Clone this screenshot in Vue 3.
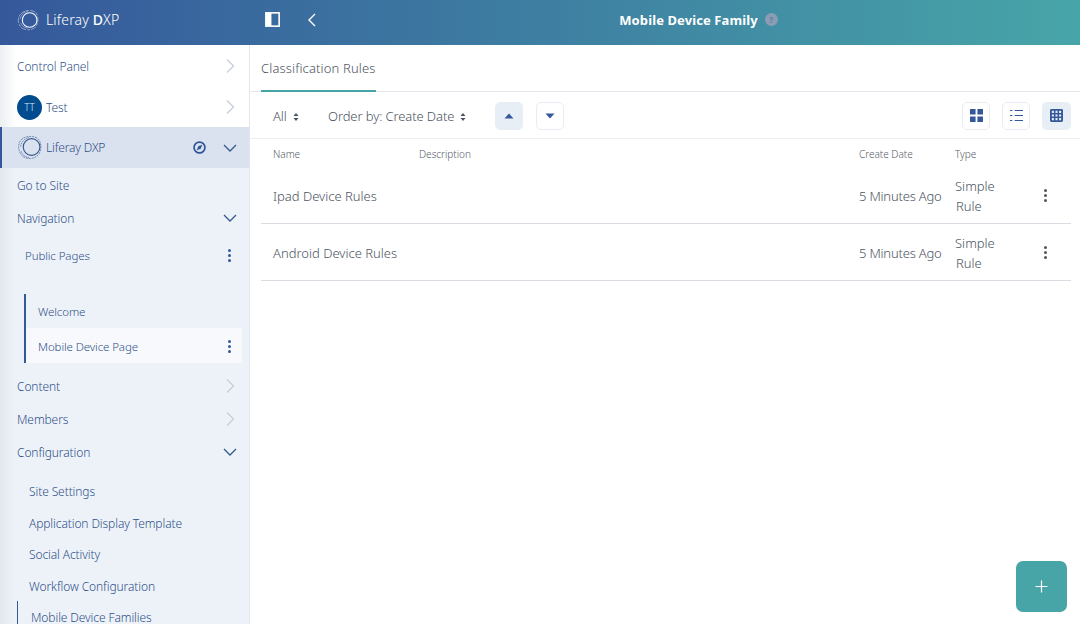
<template>
  <div class="app">
    <header class="topbar">
      <div class="brand">
        <svg class="logo" viewBox="0 0 24 24" fill="none" stroke="#fff">
          <path d="M4 5.500C8 .8 16 .5 20 3.500c3.500 3 4 11.500.5 16-3.500 3.800-11 4.300-15.500 1C.8 17 0 10 4 5.500z" stroke-width="0.6" stroke-dasharray="6 1 3 1.500" opacity="0.8" />
          <path d="M3.500 11C4 6.500 7.500 3 12 2.800M4 15c1 3.500 4 5.500 7.500 5.800" stroke-width="0.6" opacity="0.7" />
          <circle cx="13.800" cy="12" r="8" stroke-width="1.100" />
        </svg>
        <span>Liferay <b>D</b>XP</span>
      </div>
      <div class="top-actions">
        <svg class="panel-icon" viewBox="0 0 16 16">
          <path fill="#fff" d="M1 1h14v14H1z" />
          <path fill="#3b6a9c" d="M7 2.500h6.500v11H7z" />
        </svg>
        <svg class="back-icon" viewBox="0 0 10 16" fill="none" stroke="#fff" stroke-width="1.400">
          <path d="M8 2 2 8l6 6" />
        </svg>
      </div>
      <div class="title">
        <span>Mobile Device Family</span>
        <i class="help">?</i>
      </div>
    </header>

    <div class="body">
      <aside class="sidebar">
        <div class="side-white">
          <div class="row row-panel">
            <span>Control Panel</span>
            <svg class="chev-r" viewBox="0 0 10 16"><path d="M2 1.500 8.500 8 2 14.500" /></svg>
          </div>
          <div class="row row-test">
            <span class="avatar">TT</span>
            <span>Test</span>
            <svg class="chev-r" viewBox="0 0 10 16"><path d="M2 1.500 8.500 8 2 14.500" /></svg>
          </div>
        </div>
        <div class="site-row">
          <svg class="site-logo" viewBox="0 0 24 24" fill="none" stroke="#35578f">
            <path d="M4 4.500C8 .5 17 .3 20.500 4c3.500 4 3.300 11.500-.5 15.500-3.500 3.700-11 4.300-15 .5C1 16 .3 8.500 4 4.500z" stroke-width="0.6" stroke-dasharray="2 .8" />
            <path d="M3.500 11C4 6.500 7.500 3 12 2.500M4 15.500c1 3.500 4 5.800 7.500 6" stroke-width="0.6" stroke-dasharray="1.500 .7" />
            <circle cx="14" cy="11.500" r="8" stroke-width="1.100" />
          </svg>
          <span class="site-name">Liferay DXP</span>
          <svg class="compass" viewBox="0 0 16 16">
            <circle cx="8" cy="8" r="5.800" fill="none" stroke="#2f5597" stroke-width="1.800" />
            <path fill="#2f5597" d="M11 5 9.300 9.300 5 11l1.700-4.300z" />
          </svg>
          <svg class="chev-d" viewBox="0 0 16 10"><path d="M2 2 8 8l6-6" /></svg>
        </div>

        <div class="row"><span>Go to Site</span></div>
        <div class="row">
          <span>Navigation</span>
          <svg class="chev-d" viewBox="0 0 16 10"><path d="M2 2 8 8l6-6" /></svg>
        </div>
        <div class="row public-row">
          <span>Public Pages</span>
          <span class="kebab"><i></i><i></i><i></i></span>
        </div>
        <div class="page-tree">
          <div class="page">Welcome</div>
          <div class="page page-active">
            <span>Mobile Device Page</span>
            <span class="kebab"><i></i><i></i><i></i></span>
          </div>
        </div>
        <div class="row">
          <span>Content</span>
          <svg class="chev-r" viewBox="0 0 10 16"><path d="M2 1.500 8.500 8 2 14.500" /></svg>
        </div>
        <div class="row">
          <span>Members</span>
          <svg class="chev-r" viewBox="0 0 10 16"><path d="M2 1.500 8.500 8 2 14.500" /></svg>
        </div>
        <div class="row">
          <span>Configuration</span>
          <svg class="chev-d" viewBox="0 0 16 10"><path d="M2 2 8 8l6-6" /></svg>
        </div>
        <div class="config-list">
          <div v-for="item in configItems" :key="item" class="config-item">{{ item }}</div>
          <div class="config-item config-active">Mobile Device Families</div>
        </div>
      </aside>

      <main class="main">
        <nav class="tabs">
          <span class="tab">Classification Rules</span>
        </nav>
        <div class="toolbar">
          <span class="filter filter-all">All <svg class="updown" viewBox="0 0 6 10"><path d="M3 1 5.500 4h-5zM3 9 .5 6h5z" /></svg></span>
          <span class="filter filter-order">Order by: Create Date <svg class="updown" viewBox="0 0 6 10"><path d="M3 1 5.500 4h-5zM3 9 .5 6h5z" /></svg></span>
          <button class="tbtn tbtn-on"><svg viewBox="0 0 10 6"><path d="M5 .5 9.500 5.500h-9z" /></svg></button>
          <button class="tbtn sort-down"><svg viewBox="0 0 10 6"><path d="M5 5.500.5 .5h9z" /></svg></button>
          <div class="views">
            <button class="tbtn view">
              <svg viewBox="0 0 14 14"><path d="M0 0h6v6H0zM8 0h6v6H8zM0 8h6v6H0zM8 8h6v6H8z" /></svg>
            </button>
            <button class="tbtn view">
              <svg viewBox="0 0 14 14"><path d="M0 1h2.500v1.200H0zM5 1h9v1.200H5zM0 6.400h2.500v1.200H0zM5 6.400h9v1.200H5zM0 11.800h2.500V13H0zM5 11.800h9V13H5z" /></svg>
            </button>
            <button class="tbtn tbtn-on view view-last">
              <svg viewBox="0 0 14 14"><path fill-rule="evenodd" d="M1.500 0h11A1.500 1.500 0 0 1 14 1.500v11a1.500 1.500 0 0 1-1.500 1.500h-11A1.500 1.500 0 0 1 0 12.500v-11A1.500 1.500 0 0 1 1.500 0zM2 2v2.200h2.200V2zm3.900 0v2.200h2.200V2zm3.900 0v2.200H12V2zM2 5.900v2.200h2.200V5.900zm3.900 0v2.200h2.200V5.900zm3.900 0v2.200H12V5.900zM2 9.800V12h2.200V9.800zm3.900 0V12h2.200V9.800zm3.900 0V12H12V9.800z" /></svg>
            </button>
          </div>
        </div>

        <div class="table">
          <div class="thead">
            <span class="c-name">Name</span>
            <span class="c-desc">Description</span>
            <span class="c-date">Create Date</span>
            <span class="c-type">Type</span>
          </div>
          <div v-for="rule in rules" :key="rule" class="trow">
            <span class="c-name c-wide">{{ rule }}</span>
            <span class="c-date">5 Minutes Ago</span>
            <span class="c-type">Simple Rule</span>
            <span class="kebab kebab-gray"><i></i><i></i><i></i></span>
          </div>
        </div>

        <button class="fab">
          <svg viewBox="0 0 14 14" fill="none" stroke="#fff" stroke-width="1.300"><path d="M7 .5v13M.5 7h13" /></svg>
        </button>
      </main>
    </div>
  </div>
</template>

<script setup>
const configItems = [
  'Site Settings',
  'Application Display Template',
  'Social Activity',
  'Workflow Configuration'
]

const rules = ['Ipad Device Rules', 'Android Device Rules']
</script>

<style>
html, body {
  margin: 0;
  background: #fff;
}
</style>

<style scoped>
.app {
  width: 1080px;
  height: 624px;
  overflow: hidden;
  display: flex;
  flex-direction: column;
  font-family: "Noto Sans", "Open Sans", sans-serif;
  font-size: 13px;
  font-weight: 300;
  color: #3a5a8f;
}

.topbar {
  flex: 0 0 45px;
  box-sizing: border-box;
  padding-bottom: 6px;
  display: flex;
  align-items: center;
  background: linear-gradient(90deg, #35589b 0%, #47a5a8 100%);
  color: #fff;
}

.brand {
  width: 250px;
  padding-left: 17px;
  box-sizing: border-box;
  display: flex;
  align-items: center;
  gap: 7px;
  font-size: 14px;
  letter-spacing: 0.15px;
}

.brand b {
  font-weight: 500;
}

.logo {
  width: 22px;
  height: 22px;
}

.top-actions {
  display: flex;
  align-items: center;
  padding-left: 14px;
  gap: 26px;
}

.panel-icon {
  width: 17px;
  height: 17px;
}

.back-icon {
  width: 10px;
  height: 16px;
}

.title {
  flex: 1;
  display: flex;
  align-items: center;
  justify-content: center;
  gap: 7px;
  font-size: 13px;
  font-weight: 700;
  letter-spacing: 0.1px;
}

.help {
  width: 13px;
  height: 13px;
  border-radius: 50%;
  background: #8a9db4;
  color: #5f7d9d;
  font-size: 8px;
  font-style: normal;
  line-height: 13px;
  text-align: center;
}

.body {
  flex: 1;
  display: flex;
  min-height: 0;
}

.sidebar {
  width: 250px;
  box-sizing: border-box;
  border-right: 1px solid #e3e6ec;
  background: linear-gradient(90deg, #e3e8f0 0, #edf2f9 14px);
  font-size: 12px;
  letter-spacing: -0.1px;
}

.side-white {
  background: linear-gradient(90deg, #eceef2 0, #fff 16px);
  padding-top: 3px;
}

.row {
  height: 33px;
  box-sizing: border-box;
  display: flex;
  align-items: center;
  padding: 1px 11px 0 17px;
  color: #2f5088;
}

.row > .chev-r,
.row > .chev-d,
.row > .kebab {
  margin-left: auto;
}

.row-panel {
  height: 35px;
}

.row-test {
  height: 44px;
  padding-top: 4px;
  gap: 4px;
}

.avatar {
  width: 25px;
  height: 25px;
  border-radius: 50%;
  background: #004c8f;
  color: #dde6f2;
  font-size: 10px;
  line-height: 25px;
  text-align: center;
}

.chev-r {
  width: 10px;
  height: 16px;
  margin-right: 3px;
  fill: none;
  stroke: #c5ccd8;
  stroke-width: 1.200;
}

.chev-d {
  width: 16px;
  height: 10px;
  fill: none;
  stroke: #34598f;
  stroke-width: 1.300;
}

.site-row {
  height: 41px;
  display: flex;
  align-items: center;
  padding: 0 11px 0 15px;
  background: #dbe2ef;
  border-left: 2px solid #35589b;
  box-sizing: border-box;
}

.site-logo {
  width: 25px;
  height: 25px;
  flex: none;
}

.site-name {
  margin-left: 4px;
  color: #2f5088;
  letter-spacing: -0.15px;
}

.compass {
  width: 15px;
  height: 15px;
  margin-left: auto;
  margin-right: 15px;
}

.public-row {
  height: 41px;
  padding-left: 25px;
  padding-right: 18px;
  font-size: 11.500px;
}

.kebab {
  display: flex;
  flex-direction: column;
  gap: 2px;
  width: 3px;
}

.kebab i {
  width: 3px;
  height: 3px;
  border-radius: 50%;
  background: #35589b;
}

.page-tree {
  margin: 19px 7px 6px 24px;
  border-left: 2px solid #35589b;
  font-size: 11.500px;
}

.page {
  height: 34px;
  box-sizing: border-box;
  display: flex;
  align-items: center;
  padding: 1px 11px 0 12px;
  color: #2f5088;
}

.page-active {
  height: 35px;
  background: #f7f9fd;
}

.page-active .kebab {
  margin-left: auto;
}

.config-list {
  padding-top: 7px;
}

.config-item {
  height: 31.500px;
  line-height: 33.500px;
  padding-left: 29px;
  color: #2f5088;
}

.config-active {
  margin-left: 17px;
  padding-left: 13px;
  border-left: 1px solid #35589b;
}

.main {
  flex: 1;
  position: relative;
  padding: 0 9px 0 11px;
  min-width: 0;
}

.tabs {
  height: 47px;
  margin: 0 -9px 0 -11px;
  padding-left: 11px;
  border-bottom: 1px solid #e3e6ec;
  display: flex;
  box-sizing: border-box;
}

.tab {
  height: 47px;
  line-height: 47px;
  border-bottom: 2px solid #47a5a8;
  box-sizing: border-box;
  font-size: 13px;
  letter-spacing: 0.15px;
  color: #4c5462;
}

.toolbar {
  height: 47px;
  margin: 0 -9px 0 -11px;
  padding: 1px 9px 0 23px;
  border-bottom: 1px solid #edeff3;
  display: flex;
  align-items: center;
  box-sizing: border-box;
}

.filter {
  font-size: 13px;
  letter-spacing: -0.1px;
  color: #4c5462;
  display: flex;
  align-items: center;
  gap: 6px;
}

.filter-all {
  width: 55px;
  flex: none;
}

.filter-order {
  width: 167px;
  flex: none;
}

.updown {
  width: 6px;
  height: 10px;
  fill: #4c5462;
  margin-top: 2px;
}

.tbtn {
  width: 28px;
  height: 28px;
  padding: 0;
  border: 1px solid #e9edf3;
  border-radius: 5px;
  background: #fff;
  display: flex;
  align-items: center;
  justify-content: center;
}

.tbtn-on {
  background: #e8eef6;
  border-color: #e8eef6;
}

.sort-down {
  margin-left: 13px;
}

.tbtn svg {
  width: 10px;
  height: 6px;
  fill: #35589b;
}

.views {
  margin-left: auto;
  display: flex;
  gap: 12px;
}

.tbtn.view svg {
  width: 13px;
  height: 13px;
}

.view-last {
  width: 29px;
}

.table {
  color: #4c5462;
}

.thead {
  height: 29px;
  display: flex;
  align-items: center;
  font-size: 10px;
  color: #555b68;
}

.trow {
  height: 57px;
  display: flex;
  align-items: center;
  border-bottom: 1px solid #d9dce2;
  box-sizing: border-box;
  font-size: 13px;
}

.thead + .trow {
  height: 56px;
}

.trow + .trow {
  padding-top: 1px;
}

.c-name {
  width: 158px;
  padding-left: 12px;
  box-sizing: border-box;
  flex: none;
}

.c-desc {
  flex: 1;
}

.c-wide {
  flex: 1;
  white-space: nowrap;
}

.c-date {
  width: 96px;
  flex: none;
  white-space: nowrap;
}

.trow .c-date {
  letter-spacing: -0.2px;
  text-indent: -1px;
}

.c-type {
  width: 50px;
  flex: none;
  line-height: 20px;
  margin-right: 38px;
}

.trow .c-type {
  text-indent: -1px;
}

.thead .c-type {
  margin-right: 66px;
}

.trow .kebab {
  margin-right: 24px;
}

.kebab-gray i {
  background: #50555f;
}

.fab {
  position: absolute;
  right: 13px;
  bottom: 12px;
  width: 51px;
  height: 51px;
  border: 0;
  border-radius: 7px;
  background: #47a5a8;
  display: flex;
  align-items: center;
  justify-content: center;
}

.fab svg {
  width: 13px;
  height: 13px;
}
</style>
